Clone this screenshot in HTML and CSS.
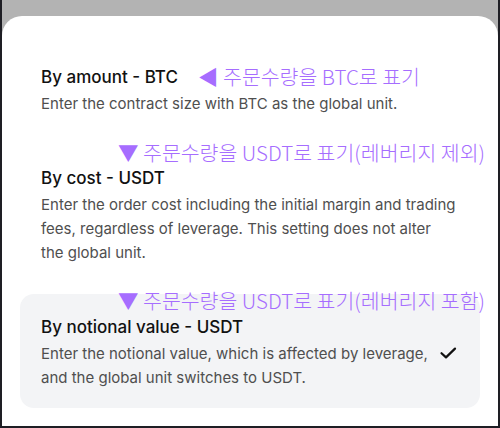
FILE: index.html
```html
<!DOCTYPE html>
<html lang="en">
<head>
<meta charset="utf-8">
<link rel="stylesheet" href="styles.css">
</head>
<body>
<div class="frame">
  <div class="sheet">
    <div class="option">
      <div class="text">
        <div class="title">By amount - BTC</div>
        <div class="desc">Enter the contract size with BTC as the global unit.</div>
      </div>
    </div>
    <div class="option">
      <div class="text">
        <div class="title">By cost - USDT</div>
        <div class="desc">Enter the order cost including the initial margin and trading fees, regardless of leverage. This setting does not alter the global unit.</div>
      </div>
    </div>
    <div class="option selected">
      <div class="text">
        <div class="title">By notional value - USDT</div>
        <div class="desc">Enter the notional value, which is affected by leverage, and the global unit switches to USDT.</div>
      </div>
      <svg class="check" width="20" height="20" viewBox="0 0 20 20"><path d="M2.5 10.2 L7 14.4 L16 5.6" fill="none" stroke="#111" stroke-width="2.2" stroke-linecap="round" stroke-linejoin="round"/></svg>
    </div>
    <div class="note note1">◀ 주문수량을 BTC로 표기</div>
    <div class="note note2">▼ 주문수량을 USDT로 표기(레버리지 제외)</div>
    <div class="note note3">▼ 주문수량을 USDT로 표기(레버리지 포함)</div>
  </div>
</div>
</body>
</html>
```
FILE: styles.css
```css
html, body {
  margin: 0;
  padding: 0;
}
body {
  width: 500px;
  height: 428px;
  overflow: hidden;
  font-family: Inter, "Noto Sans", sans-serif;
}
.frame {
  box-sizing: border-box;
  width: 500px;
  height: 428px;
  background: #b3b3b3;
  border: 2px solid #1e1e24;
  border-top: none;
  padding-top: 16px;
}
.sheet {
  position: relative;
  background: #fff;
  height: 100%;
  border-radius: 20px 20px 0 0;
  padding: 28px 18px 0;
  box-sizing: border-box;
  display: flex;
  flex-direction: column;
  gap: 11px;
}
.option {
  display: flex;
  align-items: center;
  gap: 8px;
  padding: 21px 24px 18px 21px;
  border-radius: 14px;
}
.option.selected {
  background: #f3f4f6;
}
.text {
  flex: 1;
  display: flex;
  flex-direction: column;
  gap: 3px;
}
.title {
  font-size: 17px;
  font-weight: 500;
  line-height: 24px;
  color: #111;
}
.desc {
  font-size: 15px;
  line-height: 24px;
  color: #4f4f4f;
}
.check {
  flex: none;
  margin-right: -3px;
}
.note {
  position: absolute;
  font-family: "Noto Sans CJK KR", sans-serif;
  font-weight: 300;
  font-size: 20.5px;
  line-height: 26px;
  color: #a66dff;
  white-space: nowrap;
}
.note1 { left: 196px; top: 47px; }
.note2 { left: 116px; top: 123px; }
.note3 { left: 116px; top: 271px; }
```
